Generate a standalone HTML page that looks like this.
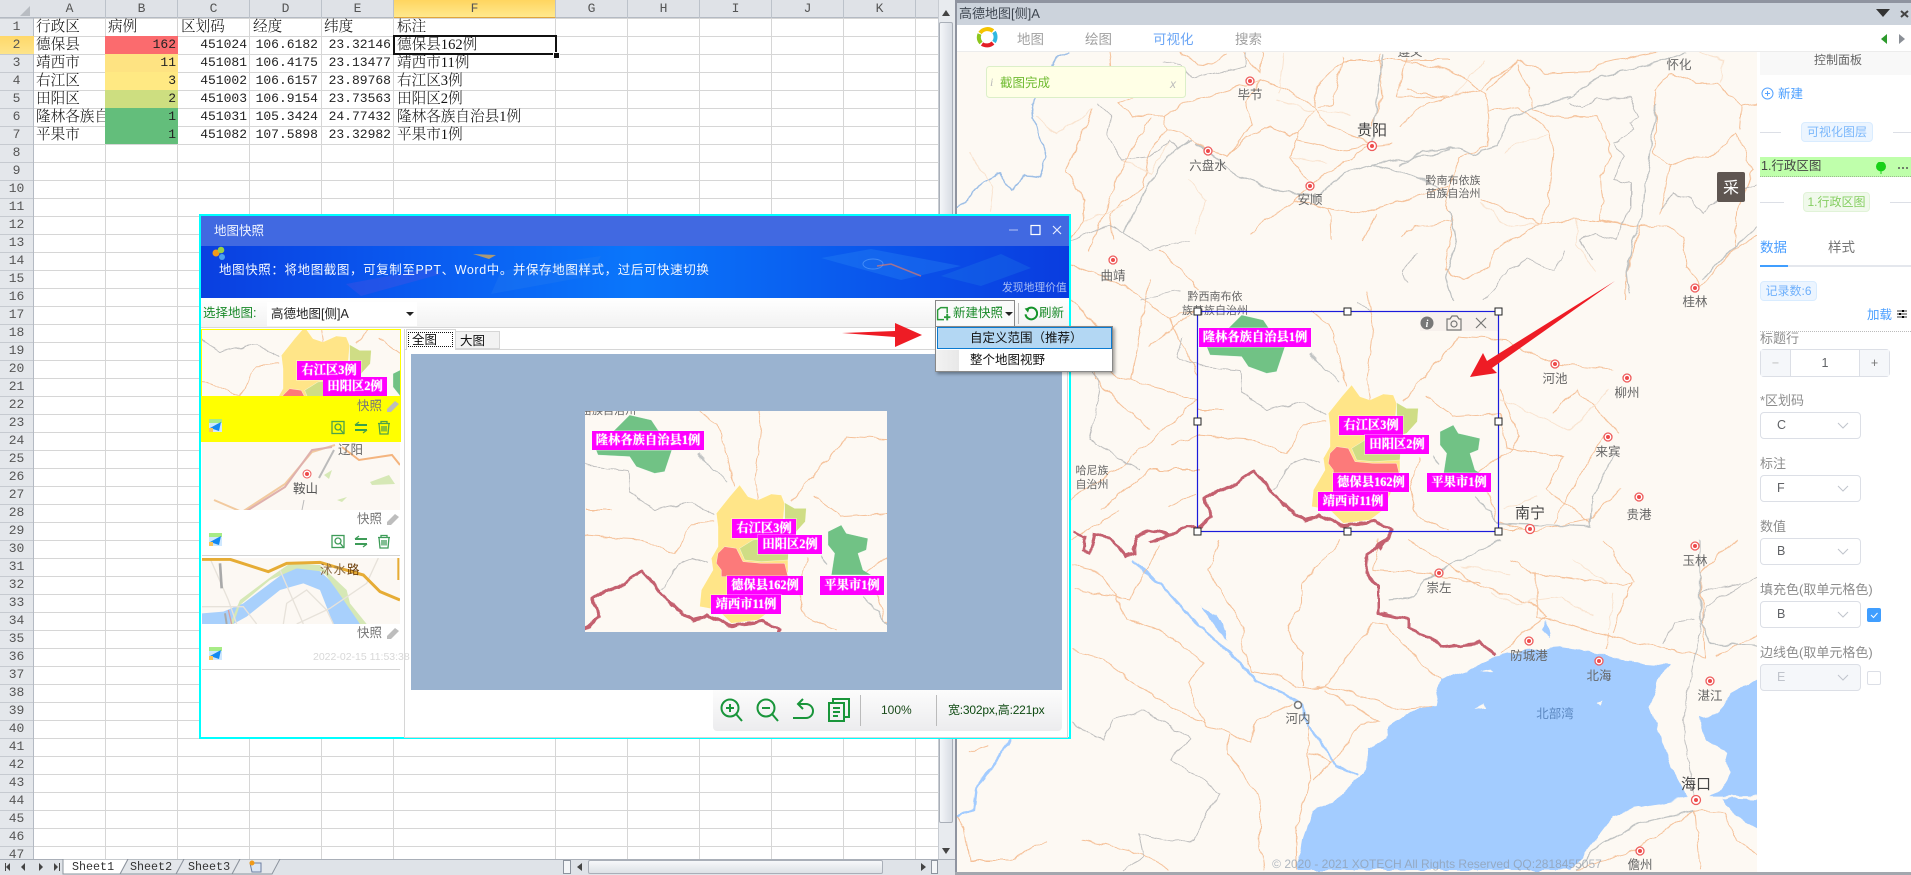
<!DOCTYPE html>
<html style="width:1911px;height:875px;overflow:hidden"><head><meta charset="utf-8"><title>地图快照</title>
<style>
html,body{margin:0;padding:0;background:#fff}
body{position:relative;width:1911px;height:875px;overflow:hidden;font-family:"Liberation Sans","Noto Sans CJK SC",sans-serif;color:#333}
#root{position:absolute;left:0;top:0;width:1911px;height:875px;overflow:hidden}
.a,.t,svg.a{position:absolute}
.t{white-space:nowrap}
.c{font-family:"Liberation Serif","Noto Serif CJK SC",serif;font-size:14.6px;line-height:18px;color:#111;font-weight:300}
.n{text-align:right;font-family:"Liberation Mono",monospace;font-size:13px;line-height:18px;color:#222}
.vl{position:absolute;top:18px;height:841px;width:1px;background:#d6d6d6}
.ch{position:absolute;top:0;height:18px;line-height:18px;text-align:center;font-family:"Liberation Mono",serif;font-size:13px;color:#555;border-right:1px solid #bcc2ca;box-sizing:border-box}
.lab{position:absolute;background:#f0f;color:#fff;font-family:"Liberation Serif","Noto Serif CJK SC",serif;font-weight:700;font-size:12.3px;height:19px;line-height:19px;text-align:center;white-space:nowrap;box-shadow:0 0 0 1px rgba(255,255,255,.3);text-shadow:0 0 1px #fff}
.pl{position:absolute;left:1760px;font-size:13px;color:#8d8d8d;white-space:nowrap;line-height:16px}
.sel{position:absolute;left:1760px;width:101px;height:27px;box-sizing:border-box;border:1px solid #dcdfe6;border-radius:4px;background:#fff;font-size:12.5px;line-height:25px;padding-left:16px;color:#606266}
.sel svg{position:absolute;right:11px;top:9px}
.road{fill:none;stroke:#f5c199;stroke-width:1;vector-effect:non-scaling-stroke}
.rdl{fill:none;stroke:#f9e3cf;stroke-width:1;vector-effect:non-scaling-stroke}
.gry{fill:none;stroke:#bdbdbd;stroke-width:.9;vector-effect:non-scaling-stroke}
.hwy{fill:none;stroke:#c0c3c3;stroke-width:1.3;vector-effect:non-scaling-stroke}
.city{font-size:12.5px;fill:#666;text-anchor:middle;font-family:"Liberation Sans","Noto Sans CJK SC",sans-serif}
.big{font-size:15px;fill:#444}
.sh{font-family:"Liberation Mono",monospace;font-size:11.7px;line-height:16px;color:#333}
</style></head><body><div id="root">

<!-- EXCEL -->
<div class="a" style="left:0;top:0;width:955px;height:875px;background:#fff"></div>
<div class="a" style="left:34px;top:18px;width:904px;height:841px;background:repeating-linear-gradient(180deg,#d6d6d6 0,#d6d6d6 1px,transparent 1px,transparent 18px)"></div>
<div class="vl" style="left:105px"></div><div class="vl" style="left:177px"></div><div class="vl" style="left:249px"></div><div class="vl" style="left:321px"></div><div class="vl" style="left:393px"></div><div class="vl" style="left:555px"></div><div class="vl" style="left:627px"></div><div class="vl" style="left:699px"></div><div class="vl" style="left:771px"></div><div class="vl" style="left:843px"></div><div class="vl" style="left:915px"></div>
<div class="a" style="left:0;top:0;width:938px;height:18px;background:#dfe2e7;border-bottom:1px solid #b4bac3;box-sizing:border-box"></div>
<div class="a" style="left:0;top:18px;width:34px;height:841px;background:repeating-linear-gradient(180deg,#c6cad0 0,#c6cad0 1px,#e4e7eb 1px,#e4e7eb 18px);border-right:1px solid #b4bac3;box-sizing:border-box"></div>
<div class="a" style="left:0;top:36px;width:34px;height:18px;background:linear-gradient(#ffd869,#fde48b)"></div>
<svg class="a" style="left:20px;top:6px" width="10" height="10"><path d="M10 0V10H0Z" fill="#b8bcc2"/></svg>
<div class="ch" style="left:34px;width:72px">A</div><div class="ch" style="left:106px;width:72px">B</div><div class="ch" style="left:178px;width:72px">C</div><div class="ch" style="left:250px;width:72px">D</div><div class="ch" style="left:322px;width:72px">E</div>
<div class="ch" style="left:394px;width:162px;background:linear-gradient(#ffd560,#ffe98e);border-bottom:1px solid #e0a53c">F</div>
<div class="ch" style="left:556px;width:72px">G</div><div class="ch" style="left:628px;width:72px">H</div><div class="ch" style="left:700px;width:72px">I</div><div class="ch" style="left:772px;width:72px">J</div><div class="ch" style="left:844px;width:72px">K</div><div class="ch" style="left:916px;width:22px;border-right:0"></div>
<div class="a" style="left:0;top:18px;width:33px;height:841px;overflow:hidden;text-align:center;font-family:'Liberation Mono',monospace;font-size:13px;line-height:18px;color:#555">1<br>2<br>3<br>4<br>5<br>6<br>7<br>8<br>9<br>10<br>11<br>12<br>13<br>14<br>15<br>16<br>17<br>18<br>19<br>20<br>21<br>22<br>23<br>24<br>25<br>26<br>27<br>28<br>29<br>30<br>31<br>32<br>33<br>34<br>35<br>36<br>37<br>38<br>39<br>40<br>41<br>42<br>43<br>44<br>45<br>46<br>47</div>

<div class="a" style="left:105px;top:36px;width:73px;height:18px;background:#fb6b6e"></div>
<div class="a" style="left:105px;top:54px;width:73px;height:18px;background:#fee382"></div>
<div class="a" style="left:105px;top:72px;width:73px;height:18px;background:#ffe983"></div>
<div class="a" style="left:105px;top:90px;width:73px;height:18px;background:#cdde80"></div>
<div class="a" style="left:105px;top:108px;width:73px;height:36px;background:#63be7b"></div>

<div class="t c" style="left:36px;top:18px">行政区</div><div class="t c" style="left:108px;top:18px">病例</div><div class="t c" style="left:181px;top:18px">区划码</div><div class="t c" style="left:253px;top:18px">经度</div><div class="t c" style="left:324px;top:18px">纬度</div><div class="t c" style="left:397px;top:18px">标注</div>
<div class="t c" style="left:36px;top:36px">德保县</div><div class="t c" style="left:36px;top:54px">靖西市</div><div class="t c" style="left:36px;top:72px">右江区</div><div class="t c" style="left:36px;top:90px">田阳区</div><div class="a c" style="left:36px;top:108px;width:69px;overflow:hidden;white-space:nowrap">隆林各族自治县</div><div class="t c" style="left:36px;top:126px">平果市</div>
<div class="t n" style="right:1735px;top:36px">162</div><div class="t n" style="right:1735px;top:54px">11</div><div class="t n" style="right:1735px;top:72px">3</div><div class="t n" style="right:1735px;top:90px">2</div><div class="t n" style="right:1735px;top:108px">1</div><div class="t n" style="right:1735px;top:126px">1</div>
<div class="t n" style="right:1664px;top:36px">451024</div><div class="t n" style="right:1664px;top:54px">451081</div><div class="t n" style="right:1664px;top:72px">451002</div><div class="t n" style="right:1664px;top:90px">451003</div><div class="t n" style="right:1664px;top:108px">451031</div><div class="t n" style="right:1664px;top:126px">451082</div>
<div class="t n" style="right:1593px;top:36px">106.6182</div><div class="t n" style="right:1593px;top:54px">106.4175</div><div class="t n" style="right:1593px;top:72px">106.6157</div><div class="t n" style="right:1593px;top:90px">106.9154</div><div class="t n" style="right:1593px;top:108px">105.3424</div><div class="t n" style="right:1593px;top:126px">107.5898</div>
<div class="t n" style="right:1520px;top:36px">23.32146</div><div class="t n" style="right:1520px;top:54px">23.13477</div><div class="t n" style="right:1520px;top:72px">23.89768</div><div class="t n" style="right:1520px;top:90px">23.73563</div><div class="t n" style="right:1520px;top:108px">24.77432</div><div class="t n" style="right:1520px;top:126px">23.32982</div>
<div class="t c" style="left:397px;top:36px">德保县162例</div><div class="t c" style="left:397px;top:54px">靖西市11例</div><div class="t c" style="left:397px;top:72px">右江区3例</div><div class="t c" style="left:397px;top:90px">田阳区2例</div><div class="t c" style="left:397px;top:108px">隆林各族自治县1例</div><div class="t c" style="left:397px;top:126px">平果市1例</div>
<div class="a" style="left:393px;top:35px;width:164px;height:20px;box-sizing:border-box;border:2px solid #111"></div>
<div class="a" style="left:553px;top:52px;width:5px;height:5px;background:#111;border:1px solid #fff"></div>

<!-- excel scrollbars + tabs -->
<div class="a" style="left:938px;top:0;width:17px;height:859px;background:#e8ebef;border-left:1px solid #c8ccd2;box-sizing:border-box"></div>
<div class="a" style="left:939px;top:22px;width:14px;height:801px;background:linear-gradient(90deg,#f4f6f9,#d8dde4);border:1px solid #a9afb8;box-sizing:border-box;border-radius:2px"></div>
<svg class="a" style="left:941px;top:847px" width="10" height="8"><path d="M1 1H9L5 7Z" fill="#444"/></svg>
<svg class="a" style="left:941px;top:9px" width="10" height="8"><path d="M1 7H9L5 1Z" fill="#444"/></svg>
<div class="a" style="left:0;top:859px;width:955px;height:16px;background:#dfe3e8;border-top:1px solid #a9afb8;box-sizing:border-box"></div>
<svg class="a" style="left:4px;top:860px" width="58" height="14" fill="#444"><path d="M6 3V11L2 7ZM1 3V11H2V3ZM21 3V11L17 7ZM35 3V11L39 7ZM50 3V11L54 7ZM55 3V11H56V3Z"/></svg>
<svg class="a" style="left:60px;top:859px" width="230" height="16">
<path d="M172 15H212L220 0H180Z" fill="#e4e7eb" stroke="#8d949e"/><path d="M116 15H172L180 0H124Z" fill="#e4e7eb" stroke="#8d949e"/><path d="M60 15H116L124 0H68Z" fill="#e4e7eb" stroke="#8d949e"/>
<path d="M3 0V15H60L68 0Z" fill="#fff" stroke="#8d949e"/>
<path d="M190 4H201V13H192Z" fill="#dbe6f5" stroke="#6c7ea0"/><circle cx="192" cy="4" r="2.500" fill="#f09a1a"/>
</svg>
<div class="t sh" style="left:72px;top:859px">Sheet1</div>
<div class="t sh" style="left:130px;top:859px">Sheet2</div>
<div class="t sh" style="left:188px;top:859px">Sheet3</div>
<div class="a" style="left:563px;top:860px;width:8px;height:14px;background:#f4f6f8;border:1px solid #8d949e;box-sizing:border-box"></div>
<div class="a" style="left:588px;top:860px;width:295px;height:14px;background:linear-gradient(#f6f8fa,#dde1e6);border:1px solid #a9afb8;box-sizing:border-box;border-radius:2px"></div>
<svg class="a" style="left:576px;top:862px" width="8" height="10"><path d="M6 1V9L1 5Z" fill="#444"/></svg>
<svg class="a" style="left:919px;top:862px" width="8" height="10"><path d="M2 1V9L7 5Z" fill="#444"/></svg>
<div class="a" style="left:931px;top:860px;width:7px;height:14px;background:#f4f6f8;border:1px solid #8d949e;box-sizing:border-box"></div>

<!-- RIGHT WINDOW -->
<div class="a" style="left:955px;top:0;width:956px;height:875px;background:#fff"></div>
<div class="a" style="left:955px;top:0;width:2px;height:875px;background:#8f94a0"></div>
<div class="a" style="left:955px;top:0;width:956px;height:3px;background:#8f94a0"></div>
<div class="a" style="left:957px;top:3px;width:954px;height:22px;background:#ccd3dc"></div>
<div class="t" style="left:959px;top:5px;font-size:13px;line-height:18px;color:#3e4650">高德地图[侧]A</div>
<svg class="a" style="left:1875px;top:8px" width="36" height="12"><path d="M1 1H15L8 9Z" fill="#333"/><path d="M26 3L33 9M33 3L26 9" stroke="#444" stroke-width="2"/></svg>
<div class="a" style="left:957px;top:25px;width:954px;height:27px;background:#fff;border-bottom:1px solid #ececec;box-sizing:border-box"></div>
<svg class="a" style="left:976px;top:26px" width="22" height="22" viewBox="0 0 22 22"><g fill="none" stroke-width="4"><path d="M4 7A9 9 0 0 1 17 5" stroke="#f5c400"/><path d="M18 6A9 9 0 0 1 18 16" stroke="#2fb8e0"/><path d="M17 17A9 9 0 0 1 6 18" stroke="#e31f26"/><path d="M5 17A9 9 0 0 1 3.500 8" stroke="#8cc61d"/></g></svg>
<div class="t" style="left:1017px;top:31px;font-size:13.5px;line-height:18px;color:#a0a0a0">地图</div>
<div class="t" style="left:1085px;top:31px;font-size:13.5px;line-height:18px;color:#a0a0a0">绘图</div>
<div class="t" style="left:1153px;top:31px;font-size:13.5px;line-height:18px;color:#6aa5f5">可视化</div>
<div class="t" style="left:1235px;top:31px;font-size:13.5px;line-height:18px;color:#a0a0a0">搜索</div>
<svg class="a" style="left:1880px;top:33px" width="28" height="12"><path d="M7 1V11L1 6Z" fill="#2c9a2c"/><path d="M19 1V11L25 6Z" fill="#8a8f96"/></svg>

<!-- MAP -->
<svg class="a" style="left:957px;top:52px" width="800" height="820" viewBox="957 52 800 820">
<defs>
<filter id="w" filterUnits="userSpaceOnUse" x="957" y="52" width="800" height="820" color-interpolation-filters="sRGB"><feTurbulence type="fractalNoise" baseFrequency=".07" numOctaves="2" seed="4" result="n"/><feDisplacementMap in="SourceGraphic" in2="n" scale="7" xChannelSelector="R" yChannelSelector="G"/></filter>
<g id="z9" transform="translate(1170,290) scale(.3333)">
<path class="road" d="M0 465L80 440L250 450L350 490L400 400L470 395M590 0L610 100L590 270L600 330M420 60L480 100L530 290M700 330L870 140L1000 150L1100 200L1155 220L1330 240M770 320L850 380L990 370L1010 470L1180 500L1130 600L1260 700M990 300L1050 440L1020 480L920 550M0 650L70 610M80 360L160 360M1000 720L1100 720L1260 690L1350 600M720 590L740 680L830 720M720 590L750 500M950 600L980 690L1060 720M1300 440L1220 570L1150 700M1350 430L1220 300L1150 370M0 90L30 70L110 60"/>
<path class="rdl" d="M990 330L1200 420L1320 300M530 530L620 560M1000 660L1100 620"/>
<path class="gry" d="M35 140L20 200L90 230L210 240L215 310L290 360L400 340L470 375M310 600L360 520L400 505L450 520M600 60L560 40"/>
<path class="hwy" d="M420 190L510 280M790 500L810 525M920 620L990 700L1260 710L1270 620L1340 480"/>
<path d="M-60 760L0 735L50 708L80 720L125 680L105 625L150 600L180 590L250 545L300 600L345 645L400 690L440 680L450 675L520 710L620 695L665 720L630 775" fill="none" stroke="#c4606f" stroke-width="3" vector-effect="non-scaling-stroke"/>
</g>
<g id="d" transform="translate(1170,290) scale(.3333)">
<path d="M545 285L570 320L600 330L640 312L670 315L680 340L675 400L690 440L690 545L640 660L600 690L520 700L480 660L425 650L430 600L465 540L460 505L480 470L480 410L475 370L515 320Z" fill="#ffe588" stroke="#fff"/>
<path d="M680 338L710 355L745 355L742 395L710 430L695 435L690 510L610 515L560 510L545 475L585 450L680 440Z" fill="#cfdd85" stroke="#fff"/>
<path d="M480 490L500 470L535 475L555 515L610 520L680 520L690 560L490 560L490 540L475 520Z" fill="#fc7a7a" stroke="#fff"/>
<path d="M850 405L865 430L930 445L925 480L900 490L915 540L940 555L820 555L830 490L810 465L810 425Z" fill="#71c285" stroke="#fff"/>
<path d="M215 75L280 90L300 120L345 170L320 245L290 250L235 230L215 200L120 195L110 170L170 120Z" fill="#71c285" stroke="#fff"/>
</g>
</defs>
<rect x="957" y="52" width="800" height="820" fill="#fdf9f3"/>
<g filter="url(#w)">
<g transform="translate(950,540) scale(.5102,.3333)">
<path d="M680 990L690 900L710 810L750 790L790 730L815 700L820 630L855 590L860 560L895 520L950 495L960 420L1020 390L1070 350L1130 330L1200 320L1270 340L1330 365L1410 372L1385 430L1370 500L1400 620L1420 700L1445 770L1400 790L1340 805L1300 830L1280 870L1240 950L1215 990Z" fill="#a3ccff"/>
<path d="M1600 400L1530 460L1510 520L1470 530L1480 600L1520 640L1530 700L1510 750L1490 770L1600 770Z" fill="#a3ccff"/>
<path d="M1600 780L1510 775L1540 830L1600 880Z" fill="#a3ccff"/>
<path d="M1170 240L1160 270L1175 290ZM490 190L530 240L545 300L520 260Z" fill="#a3ccff"/>
<path d="M1030 510L1045 490L1050 505ZM1265 490L1280 485L1275 500ZM1040 395L1060 385L1065 395Z" fill="#fdf9f3"/>
<path d="M355 60L410 130L470 230L520 300L580 390L600 420L650 460L690 490L700 560L740 630L760 680L800 710" fill="none" stroke="#a3ccff" stroke-width="2.500" vector-effect="non-scaling-stroke"/>
<path d="M120 600L80 680L50 750L45 810L15 830" fill="none" stroke="#a3ccff" stroke-width="2.500" vector-effect="non-scaling-stroke"/>
<path class="road" d="M240 70L300 105L345 235L410 270L495 365L465 430L500 560L545 575L590 610L600 545L670 490M505 90L540 180L575 260L570 310L590 395L650 410L680 445L735 440L815 470L880 510L945 500M530 0L505 90M240 330L300 360L400 470L500 555M765 0L690 130L690 190L660 270L690 340L690 440M735 440L760 390L780 345L830 250L855 255L930 380L960 420M545 580L545 640L610 780L605 900L615 990M700 560L705 720L680 860L680 990M705 640L750 670L710 720M750 670L805 550L840 545L735 450M900 0L1040 140L1140 190L1170 230L1140 260L1080 340M1100 60L1140 100L1290 130L1335 130L1300 280M1150 100L1150 230L1180 240L1320 300L1480 350M1280 0L1340 130M1290 280L1290 330M1500 350L1590 280M1540 0L1470 100L1480 350M840 0L830 90L940 100L1040 130M190 905L120 960L40 960L30 860L15 830M35 640L75 620M260 900L375 940L430 990M1460 810L1520 820L1540 900L1590 950M1460 810L1470 990M1460 810L1340 930L1230 990"/>
<path class="rdl" d="M1060 160L1100 190L1200 170L1260 230M1220 60L1290 130M1300 160L1290 270M1000 80L1100 100"/>
<path class="gry" d="M240 550L300 600L320 540L380 510L430 560L470 600L430 660L480 700L530 760L500 830L480 900L440 905L370 880L380 950L340 990M1470 160L1490 150L1550 130M1460 240L1420 250L1400 310M1590 100L1480 200L1440 500L1440 600L1460 770"/>
<path class="hwy" d="M1080 0L1000 60L930 120L910 170L860 180M1470 0L1470 230L1490 310L1590 320M1460 810L1350 850L1270 920L1230 990"/>
</g>
<g transform="translate(950,0) scale(.3333)">
<path d="M355 155L320 170L300 210L245 310L250 360L290 470L270 530L230 525L185 570L150 520L100 545L50 600L25 620" fill="none" stroke="#9ebfe6" stroke-width="1.500" vector-effect="non-scaling-stroke"/>
<path class="road" d="M480 155L485 195L540 240L555 290L510 310L550 345L640 350L700 310L780 285L880 255L930 240L1010 270L1090 320L1130 375L1265 435M640 350L650 390L720 410L770 450L830 470L880 420L960 380L1020 405L1045 400L1090 330M430 330L345 515L405 600L400 660L360 720M650 390L600 450L580 560L480 640L490 720M1265 435L1100 540L1030 600L1140 625L1240 640L1290 620L1500 560M1045 400L1020 470L1070 540M1040 420L1180 450L1265 435L1330 430M1180 170L1150 310L1100 320M1290 160L1300 290L1265 380M1370 170L1340 290L1500 290M930 240L890 310L910 370L830 470M690 155L740 190L790 195L830 160M880 155L930 220L935 155M1280 640L1240 720M1140 625L1145 720M1030 600L900 700M1500 180L1370 180L1180 180L1100 260L1090 320"/>
<path class="rdl" d="M260 350L320 400L430 330M510 480L600 520L660 420M980 300L1080 330L1200 340M1020 470L1130 490M1000 160L985 280M60 460L130 560L120 640M400 660L520 620M720 540L770 600L730 700"/>
<path class="gry" d="M640 185L690 195L730 235L890 200L890 160M445 310L485 345L470 400L510 480L600 470L660 420L680 450L720 420"/>
<path class="hwy" d="M730 420L670 450L600 545L520 700M740 430L870 530L970 570L1100 590L1180 520L1275 490L1420 470L1500 450M1265 490L1420 540L1500 590M1300 160L1285 300L1265 430"/>
</g>
<g transform="translate(1400,40) scale(.3333)">
<path class="road" d="M0 60L150 90L260 160L265 240L260 320L175 355L140 490L160 540L135 690L190 720L270 680L280 630L420 550L440 500L460 340L445 270L355 200L265 215M140 175L20 145M140 175L245 145L350 60L440 100L570 95L600 70L800 30M265 150L350 60M350 70L390 150L400 210L465 230L590 230L610 260L635 350L600 410L610 490L595 540L720 560L800 555L850 590L860 680L900 740L1000 630L1070 590M420 550L530 535L720 560L680 700L675 780M810 100L765 150L770 280L760 340L810 375L880 350L930 355L1010 280L1060 390L1010 520L1000 630M810 375L780 520M810 100L890 130L950 130L1025 200L1020 270M1025 200L1080 190M0 260L60 200L140 175M0 590L45 560L160 545M245 480L420 550"/>
<path class="rdl" d="M245 490L320 560L420 550M530 535L530 610L590 700M800 0L970 60L960 130M250 60L160 170M320 340L350 310L450 280"/>
<path class="gry" d="M510 190L540 205L590 175L690 175L715 230L690 250L700 270L640 310L670 350L640 420L690 430L690 500L650 600L590 580L540 600L580 660M500 630L460 690L380 655L330 690L250 780M50 640L10 690L20 730M780 510L820 460L860 470L910 520L960 470L1070 435"/>
<path class="hwy" d="M510 170L400 205L330 230L290 320L220 345L170 325L70 335L0 375M860 40L740 75L600 110L500 180M770 190L740 420L730 510L700 600L680 700L690 760M150 510L170 600L140 710L160 780M1070 560L900 720"/>
</g>
<path class="road" d="M1071 265L1125 285L1170 320L1197 375M1071 360L1130 380L1197 400L1130 460L1071 500M1075 590L1130 600L1160 545M1090 250L1120 170L1150 120M957 230L1020 250L1071 270M1130 380L1150 280M1100 510L1150 470L1200 470M1071 300L1100 330L1095 380L1150 430M1160 250L1200 290M1071 540L1120 510M1150 345L1197 310"/>
<path class="gry" d="M1080 330L1100 390L1090 440L1140 470M1140 300L1180 290M1071 240L1110 225L1150 250L1190 240"/>
<use href="#z9"/>
<path d="M1073 532L1085 537L1083 550L1090 552L1095 535L1110 538L1125 556L1136 553L1135 535L1150 530L1170 535M1386 540L1368 553L1366 573L1378 587L1378 613L1409 620L1409 628L1430 638L1442 648L1480 643L1496 655" fill="none" stroke="#c4606f" stroke-width="3"/>
</g>
<use href="#d"/>
<g fill="#fff" stroke="#ee5c5c" stroke-width="1.300">
<circle cx="1250" cy="81" r="4"/><circle cx="1372" cy="146" r="4.500"/><circle cx="1208" cy="151" r="4"/><circle cx="1310" cy="186" r="4"/><circle cx="1695" cy="288" r="4"/><circle cx="1113" cy="260" r="4"/><circle cx="1555" cy="364" r="4"/><circle cx="1627" cy="378" r="4"/><circle cx="1608" cy="437" r="4"/><circle cx="1639" cy="497" r="4"/><circle cx="1695" cy="546" r="4"/><circle cx="1530" cy="529" r="4.500"/><circle cx="1439" cy="573" r="4"/><circle cx="1529" cy="641" r="4"/><circle cx="1599" cy="661" r="4"/><circle cx="1710" cy="681" r="4"/><circle cx="1696" cy="800" r="4.500"/><circle cx="1640" cy="851" r="4"/></g>
<g fill="#ee4a4a"><circle cx="1250" cy="81" r="2"/><circle cx="1372" cy="146" r="2"/><circle cx="1208" cy="151" r="2"/><circle cx="1310" cy="186" r="2"/><circle cx="1695" cy="288" r="2"/><circle cx="1113" cy="260" r="2"/><circle cx="1555" cy="364" r="2"/><circle cx="1627" cy="378" r="2"/><circle cx="1608" cy="437" r="2"/><circle cx="1639" cy="497" r="2"/><circle cx="1695" cy="546" r="2"/><circle cx="1530" cy="529" r="2"/><circle cx="1439" cy="573" r="2"/><circle cx="1529" cy="641" r="2"/><circle cx="1599" cy="661" r="2"/><circle cx="1710" cy="681" r="2"/><circle cx="1696" cy="800" r="2"/><circle cx="1640" cy="851" r="2"/></g>
<circle cx="1298" cy="705" r="3.500" fill="#fff" stroke="#777" stroke-width="1.500"/>
<g class="city">
<text x="1250" y="99">毕节</text><text x="1208" y="170">六盘水</text><text x="1310" y="204">安顺</text>
<text x="1372" y="135" class="big">贵阳</text>
<text x="1453" y="184" font-size="11">黔南布依族</text><text x="1453" y="197" font-size="11">苗族自治州</text>
<text x="1679" y="69">怀化</text><text x="1113" y="280">曲靖</text><text x="1695" y="306">桂林</text>
<text x="1215" y="300" font-size="11">黔西南布依</text><text x="1215" y="314" font-size="11">族苗族自治州</text>
<text x="1555" y="383">河池</text><text x="1627" y="397">柳州</text><text x="1608" y="456">来宾</text><text x="1639" y="519">贵港</text><text x="1695" y="565">玉林</text>
<text x="1530" y="518" class="big">南宁</text><text x="1439" y="592">崇左</text><text x="1529" y="660">防城港</text><text x="1599" y="680">北海</text><text x="1710" y="700">湛江</text>
<text x="1555" y="718" style="fill:#5b87c0">北部湾</text><text x="1696" y="789" class="big">海口</text><text x="1640" y="869">儋州</text><text x="1298" y="723">河内</text>
<text x="1092" y="474" font-size="11">哈尼族</text><text x="1092" y="488" font-size="11">自治州</text>
<text x="1410" y="56">遵义</text>
</g>
<rect x="986.500" y="66.500" width="199" height="31" rx="3" fill="#ffffe6" stroke="#dcefc8"/>
<text x="990" y="86" font-size="12" font-style="italic" fill="#bbb" font-family="Liberation Serif">i</text>
<text x="1000" y="87" font-size="12.500" fill="#6fbb30">截图完成</text>
<text x="1170" y="88" font-size="12" font-style="italic" fill="#bbb">x</text>
<text x="1437" y="868" font-size="12" text-anchor="middle" fill="#8e9aa8" opacity=".7">© 2020 - 2021 XOTECH All Rights Reserved QQ:2818455057</text>
<rect x="1717" y="172" width="28" height="30" rx="2" fill="#5f5651"/>
<text x="1731" y="193" font-size="16" fill="#fff" text-anchor="middle">采</text>
<!-- selection -->
<rect x="1420" y="313" width="78" height="18" fill="#f6efec" opacity=".9"/>
<circle cx="1427" cy="323" r="6.500" fill="#777"/><text x="1427" y="327" font-size="10" font-weight="700" font-style="italic" fill="#fff" text-anchor="middle" font-family="Liberation Serif">i</text>
<g fill="none" stroke="#777" stroke-width="1.200"><path d="M1447 319H1450L1452 316H1457L1459 319H1461V330H1447Z"/><circle cx="1454" cy="324" r="3"/><path d="M1476 318L1486 328M1486 318L1476 328"/></g>
<rect x="1197.500" y="311.500" width="301" height="220" fill="none" stroke="#1b1bdc" stroke-width="1.200"/>
<g fill="#fff" stroke="#222"><rect x="1194" y="308" width="7" height="7"/><rect x="1344" y="308" width="7" height="7"/><rect x="1495" y="308" width="7" height="7"/><rect x="1194" y="418" width="7" height="7"/><rect x="1495" y="418" width="7" height="7"/><rect x="1194" y="528" width="7" height="7"/><rect x="1344" y="528" width="7" height="7"/><rect x="1495" y="528" width="7" height="7"/></g>
<path d="M1615 281L1492 368L1497 373L1470 377L1483 353L1487 361Z" fill="#ee1c25"/>
</svg>
<div class="lab" style="left:1199px;top:328px;width:112px">隆林各族自治县1例</div>
<div class="lab" style="left:1339px;top:416px;width:64px">右江区3例</div>
<div class="lab" style="left:1365px;top:435px;width:64px">田阳区2例</div>
<div class="lab" style="left:1333px;top:473px;width:76px">德保县162例</div>
<div class="lab" style="left:1318px;top:492px;width:70px">靖西市11例</div>
<div class="lab" style="left:1427px;top:473px;width:64px">平果市1例</div>

<!-- RIGHT PANEL -->
<div class="a" style="left:1757px;top:52px;width:154px;height:820px;background:#fff"></div>
<div class="a" style="left:1760px;top:52px;width:151px;height:23px;background:#f8f8f8"></div>
<div class="t" style="left:1814px;top:52px;font-size:12px;line-height:17px;color:#666">控制面板</div>
<svg class="a" style="left:1761px;top:87px" width="13" height="13" viewBox="0 0 13 13"><circle cx="6.500" cy="6.500" r="5.500" fill="none" stroke="#56a3ff"/><path d="M4 6.500H9M6.500 4V9" stroke="#56a3ff"/></svg>
<div class="t" style="left:1778px;top:85px;font-size:12.5px;line-height:18px;color:#4a9eff">新建</div>
<div class="a" style="left:1760px;top:132px;width:21px;height:1px;background:#dcdfe6"></div><div class="a" style="left:1893px;top:132px;width:18px;height:1px;background:#dcdfe6"></div>
<div class="a" style="left:1801px;top:122px;width:72px;height:20px;box-sizing:border-box;border:1px solid #d9ecff;border-radius:4px;background:#ecf5ff;color:#7cb8fb;font-size:12px;line-height:18px;text-align:center">可视化图层</div>
<div class="a" style="left:1760px;top:157px;width:151px;height:20px;background:#bfffab;border-bottom:1px dotted #9bbb90;box-sizing:border-box"></div>
<div class="t" style="left:1761px;top:157px;font-size:12.5px;line-height:19px;color:#444">1.行政区图</div>
<svg class="a" style="left:1876px;top:162px" width="34" height="13"><path d="M5 0A4.500 4.500 0 0 1 5 9Q5 12 5 12Q5 12 5 9A4.500 4.500 0 0 1 5 0Z" fill="#17d117" stroke="#17d117"/><circle cx="23" cy="6" r="1" fill="#555"/><circle cx="27" cy="6" r="1" fill="#555"/><circle cx="31" cy="6" r="1" fill="#555"/></svg>
<div class="a" style="left:1760px;top:202px;width:24px;height:1px;background:#dcdfe6"></div><div class="a" style="left:1890px;top:202px;width:21px;height:1px;background:#dcdfe6"></div>
<div class="a" style="left:1803px;top:192px;width:67px;height:20px;box-sizing:border-box;border:1px solid #e1f3d8;border-radius:4px;background:#f0f9eb;color:#85ce61;font-size:12px;line-height:18px;text-align:center">1.行政区图</div>
<div class="t" style="left:1760px;top:238px;font-size:13.5px;line-height:19px;color:#4a9eff">数据</div>
<div class="t" style="left:1828px;top:238px;font-size:13.5px;line-height:19px;color:#777">样式</div>
<div class="a" style="left:1760px;top:265px;width:151px;height:2px;background:#e4e7ed"></div><div class="a" style="left:1760px;top:265px;width:28px;height:2px;background:#409eff"></div>
<div class="a" style="left:1760px;top:281px;width:57px;height:20px;box-sizing:border-box;border:1px solid #d9ecff;border-radius:4px;background:#ecf5ff;color:#6fb0fb;font-size:12px;line-height:18px;text-align:center">记录数:6</div>
<div class="t" style="left:1867px;top:306px;font-size:12.5px;line-height:18px;color:#4a9eff">加载</div>
<svg class="a" style="left:1896px;top:308px" width="12" height="12"><path d="M1 3H11M1 6H11M1 9H11" stroke="#333"/><path d="M7 2V4M4 5V7M7 8V10" stroke="#000" stroke-width="2"/></svg>
<div class="a" style="left:1760px;top:331px;width:151px;border-top:1px dotted #bbb"></div>
<div class="pl" style="top:331px">标题行</div>
<div class="a" style="left:1760px;top:349px;width:130px;height:28px;box-sizing:border-box;border:1px solid #dcdfe6;border-radius:4px;background:#fff;text-align:center;font-size:12.5px;line-height:26px;color:#606266">1<div class="a" style="left:0;top:0;width:29px;height:26px;background:#f5f7fa;border-right:1px solid #dcdfe6;color:#bbb">−</div><div class="a" style="right:0;top:0;width:29px;height:26px;background:#f5f7fa;border-left:1px solid #dcdfe6;color:#777">+</div></div>
<div class="pl" style="top:393px">*区划码</div>
<div class="sel" style="top:412px">C<svg width="12" height="7"><path d="M1 1L6 6L11 1" fill="none" stroke="#c0c4cc"/></svg></div>
<div class="pl" style="top:456px">标注</div>
<div class="sel" style="top:475px">F<svg width="12" height="7"><path d="M1 1L6 6L11 1" fill="none" stroke="#c0c4cc"/></svg></div>
<div class="pl" style="top:519px">数值</div>
<div class="sel" style="top:538px">B<svg width="12" height="7"><path d="M1 1L6 6L11 1" fill="none" stroke="#c0c4cc"/></svg></div>
<div class="pl" style="top:582px">填充色(取单元格色)</div>
<div class="sel" style="top:601px">B<svg width="12" height="7"><path d="M1 1L6 6L11 1" fill="none" stroke="#c0c4cc"/></svg></div>
<div class="a" style="left:1867px;top:608px;width:14px;height:14px;background:#409eff;border-radius:2px"></div>
<svg class="a" style="left:1867px;top:608px" width="14" height="14"><path d="M4 7L6.500 9.500L10.500 5" fill="none" stroke="#fff"/></svg>
<div class="pl" style="top:645px">边线色(取单元格色)</div>
<div class="sel" style="top:664px;background:#f5f7fa;color:#c0c4cc">E<svg width="12" height="7"><path d="M1 1L6 6L11 1" fill="none" stroke="#c0c4cc"/></svg></div>
<div class="a" style="left:1867px;top:671px;width:14px;height:14px;background:#fff;border:1px solid #dcdfe6;border-radius:2px;box-sizing:border-box"></div>
<div class="a" style="left:955px;top:872px;width:956px;height:3px;background:#a3a7ae"></div>

<!-- DIALOG -->
<div class="a" style="left:199px;top:214px;width:872px;height:525px;box-sizing:border-box;border:2px solid #0ff;background:#fff"></div>
<div class="a" style="left:201px;top:216px;width:868px;height:30px;background:#4169e1"></div>
<div class="t" style="left:214px;top:221px;font-size:12.5px;line-height:20px;color:#f0f4ff">地图快照</div>
<svg class="a" style="left:1005px;top:222px" width="62" height="16"><path d="M4 8H13" stroke="#8fa6ee" stroke-width="1.500"/><rect x="26" y="3.500" width="9" height="9" fill="none" stroke="#fff" stroke-width="1.200"/><path d="M48 4L56 12M56 4L48 12" stroke="#e6ecff" stroke-width="1.200"/></svg>
<div class="a" style="left:201px;top:246px;width:868px;height:52px;background:linear-gradient(90deg,#0a3fe0 0%,#0a57ee 22%,#0a76fb 50%,#0a5ff0 70%,#0a3cdf 100%)"></div>
<svg class="a" style="left:201px;top:246px" width="868" height="52">
<g fill="#2b8cf5" opacity=".3"><path d="M620 12L670 3L760 20L700 34Z"/><path d="M800 8L830 22L780 40L740 30Z" fill="#1f7de8"/><path d="M300 25L400 10L390 30L290 48Z" fill="#2b7ff0"/></g>
<path d="M145 38L230 22L240 28L160 50Z" fill="#6a4fdc" opacity=".25"/><path d="M272 8L295 9L288 13Z" fill="#f0b040" opacity=".7"/>
<ellipse cx="672" cy="18" rx="10" ry="5" fill="none" stroke="#6fb0ff" opacity=".5"/><path d="M676 20L690 18L720 30" stroke="#ff7b55" stroke-width="1.500" fill="none" opacity=".6"/>
<circle cx="15" cy="7" r="3.500" fill="#f09a1a"/><circle cx="20" cy="4" r="3.300" fill="#9ad044"/><circle cx="21" cy="11" r="3" fill="#4aa0f0"/></svg>
<div class="t" style="left:219px;top:261px;font-size:12.500px;line-height:18px;color:#f4f8ff;letter-spacing:.6px">地图快照：将地图截图，可复制至PPT、Word中。并保存地图样式，过后可快速切换</div>
<div class="t" style="left:1002px;top:281px;font-size:10.800px;line-height:14px;color:#a8bcf4">发现地理价值</div>
<div class="a" style="left:201px;top:298px;width:868px;height:30px;background:linear-gradient(#fff,#f2f2f2);border-bottom:1px solid #d8d8d8;box-sizing:border-box"></div>
<div class="t" style="left:203px;top:304px;font-size:12.500px;line-height:18px;color:#1a8a2a">选择地图:</div>
<div class="a" style="left:267px;top:302px;width:150px;height:24px;background:#fff"></div>
<div class="t" style="left:271px;top:305px;font-size:12.500px;line-height:18px;color:#222">高德地图[侧]A</div>
<svg class="a" style="left:405px;top:311px" width="10" height="6"><path d="M1 1H9L5 5Z" fill="#222"/></svg>

<!-- toolbar buttons -->
<div class="a" style="left:935px;top:300px;width:80px;height:27px;border:1px solid #888;border-bottom:0;box-sizing:border-box;background:#fafafa"></div>
<svg class="a" style="left:936px;top:306px" width="16" height="16" viewBox="0 0 20 20"><path d="M10 17H2V5L6 2H14V9" fill="none" stroke="#2a9a3a" stroke-width="1.800"/><path d="M14 10V18M10 14H18" stroke="#2a9a3a" stroke-width="2.400"/></svg>
<div class="t" style="left:953px;top:304px;font-size:12.500px;line-height:18px;color:#1a8a2a">新建快照</div>
<svg class="a" style="left:1004px;top:311px" width="10" height="6"><path d="M1 1H9L5 5Z" fill="#222"/></svg>
<div class="a" style="left:1018px;top:303px;width:1px;height:21px;background:#bbb"></div>
<svg class="a" style="left:1023px;top:306px" width="15" height="15" viewBox="0 0 18 18"><path d="M5 4A7 7 0 1 1 3 10" fill="none" stroke="#14932a" stroke-width="2.400"/><path d="M2 3L8 2L6 8Z" fill="#14932a"/></svg>
<div class="t" style="left:1039px;top:304px;font-size:12.500px;line-height:18px;color:#1a8a2a">刷新</div>

<!-- left list -->
<div class="a" style="left:404px;top:329px;width:1px;height:408px;background:#d6d6d6"></div>
<div class="a" style="left:404px;top:737px;width:663px;height:1px;background:#d6d6d6"></div>
<div class="a" style="left:1067px;top:328px;width:1px;height:410px;background:#d6d6d6"></div>
<svg class="a" style="left:202px;top:329px" width="198" height="67" viewBox="1249 387 198 67"><rect x="1249" y="387" width="198" height="67" fill="#fdf9f3"/><g filter="url(#w)"><use href="#z9"/></g><use href="#d"/></svg>
<div class="lab" style="left:297px;top:361px;width:64px">右江区3例</div>
<div class="a" style="left:323px;top:377px;width:64px;height:19px;overflow:hidden"><div class="lab" style="left:0;top:0;width:64px">田阳区2例</div></div>
<div class="a" style="left:201px;top:329px;width:200px;height:113px;box-sizing:border-box;border:1px solid #ff0"></div>
<div class="a" style="left:201px;top:396px;width:200px;height:46px;background:#ff0"></div>
<div class="t" style="left:357px;top:397px;font-size:12.500px;line-height:18px;color:#777">快照</div>
<div class="t" style="left:357px;top:510px;font-size:12.500px;line-height:18px;color:#777">快照</div>
<div class="t" style="left:357px;top:624px;font-size:12.500px;line-height:18px;color:#777">快照</div>
<svg class="a" style="left:385px;top:398px" width="16" height="16"><path d="M2 11L10 3L14 6L6 14L2 14Z" fill="#bdbdbd"/></svg>
<svg class="a" style="left:385px;top:511px" width="16" height="16"><path d="M2 11L10 3L14 6L6 14L2 14Z" fill="#bdbdbd"/></svg>
<svg class="a" style="left:385px;top:625px" width="16" height="16"><path d="M2 11L10 3L14 6L6 14L2 14Z" fill="#bdbdbd"/></svg>
<svg class="a" style="left:209px;top:419px" width="13" height="13"><rect width="13" height="13" fill="#cfe8ff"/><rect width="13" height="4" fill="#a7ec86"/><path d="M1 9L12 3L10 12Z" fill="#1489f0"/><rect y="9" width="4" height="4" fill="#f9c55a"/></svg>
<svg class="a" style="left:209px;top:533px" width="13" height="13"><rect width="13" height="13" fill="#cfe8ff"/><rect width="13" height="4" fill="#a7ec86"/><path d="M1 9L12 3L10 12Z" fill="#1489f0"/><rect y="9" width="4" height="4" fill="#f9c55a"/></svg>
<svg class="a" style="left:209px;top:647px" width="13" height="13"><rect width="13" height="13" fill="#cfe8ff"/><rect width="13" height="4" fill="#a7ec86"/><path d="M1 9L12 3L10 12Z" fill="#1489f0"/><rect y="9" width="4" height="4" fill="#f9c55a"/></svg>
<svg class="a" style="left:331px;top:420px" width="62" height="16" fill="none" stroke="#4da24a" stroke-width="1.300"><rect x="1" y="1.500" width="12" height="12"/><circle cx="7" cy="7" r="3"/><path d="M9 9L13 14"/><path d="M24 5H36M36 10H24" stroke-width="2" stroke="#3aa14a"/><path d="M24 5L28 2M36 10L32 13"/><path d="M47 3.500H59M50 3.500V1.500H56V3.500M48 3.500L49 14H57L58 3.500M51 6V11.500M53 6V11.500M55 6V11.500"/></svg>
<svg class="a" style="left:331px;top:534px" width="62" height="16" fill="none" stroke="#3e9c58" stroke-width="1.300"><rect x="1" y="1.500" width="12" height="12"/><circle cx="7" cy="7" r="3"/><path d="M9 9L13 14"/><path d="M24 5H36M36 10H24" stroke-width="2"/><path d="M24 5L28 2M36 10L32 13"/><path d="M47 3.500H59M50 3.500V1.500H56V3.500M48 3.500L49 14H57L58 3.500M51 6V11.500M53 6V11.500M55 6V11.500"/></svg>
<!-- thumb 2 -->
<svg class="a" style="left:202px;top:442px" width="198" height="68" viewBox="190 210 198 68" preserveAspectRatio="none"><rect x="190" y="210" width="198" height="68" fill="#fcf8f3"/>
<path d="M202 268L230 280L273 252L300 220L323 213" fill="none" stroke="#f2ca9f" stroke-width="2"/><path d="M233 280L273 255L300 218L320 215" fill="none" stroke="#dfb0ad" stroke-width="2"/><path d="M307 246L322 218" stroke="#bbb" stroke-width="2" fill="none"/><path d="M330 215L347 228L380 223L388 233" fill="none" stroke="#f4b47e" stroke-width="2"/><path d="M358 250L377 243L383 252L360 253ZM325 268L335 265L330 270ZM312 243L320 238L317 247Z" fill="#d6e8b6"/><path d="M290 278L292 268" stroke="#bbb" fill="none"/>
</svg>
<div class="t" style="left:338px;top:442px;font-size:12.500px;line-height:16px;color:#666">辽阳</div>
<div class="t" style="left:293px;top:480px;font-size:12.500px;line-height:18px;color:#555">鞍山</div>
<svg class="a" style="left:300px;top:467px" width="14" height="14"><circle cx="7" cy="7" r="4" fill="#fff" stroke="#ee5c5c"/><circle cx="7" cy="7" r="2" fill="#ee4a4a"/></svg>
<div class="a" style="left:202px;top:555px;width:198px;height:1px;background:#d4d4d4"></div>
<!-- thumb 3 -->
<svg class="a" style="left:202px;top:558px" width="198" height="66" viewBox="36 174 594 198" preserveAspectRatio="none">
<rect x="36" y="174" width="594" height="198" fill="#fcf8f3"/>
<path d="M36 372V340L100 335L160 310L240 250L300 205L380 205L430 250L470 300L510 372H430L390 270L340 250L270 270L170 350L130 372Z" fill="#a8d0fc"/>
<path d="M300 190L390 195L470 270L480 310L530 372H510L440 270L400 215L320 205L240 240L150 315L130 372H120L150 300L250 225Z" fill="#d6e8b6"/>
<g fill="none" stroke="#e7e2da" stroke-width="4"><path d="M36 320H160L200 372M270 210L340 372M60 175L115 300L140 372M320 372L420 325L530 250L565 174M280 372L290 310L350 270L410 330L430 372"/></g>
<path d="M36 178L120 178L235 215L290 190L390 187L450 205L520 225L570 275L630 300" fill="none" stroke="#e6ac35" stroke-width="9"/>
<path d="M90 190L95 265" fill="none" stroke="#a9a9a9" stroke-width="8"/><path d="M105 340L110 372" stroke="#aaa" stroke-width="6"/><path d="M115 330L125 372" stroke="#d9a0a0" stroke-width="4"/>
<path d="M625 174V240" stroke="#e6ac35" stroke-width="6"/>
</svg>
<div class="t" style="left:320px;top:561px;font-size:12.500px;line-height:18px;color:#8a6a42;letter-spacing:1px">沭水<span style="color:#6b3d07">路</span></div>
<div class="t" style="left:313px;top:650px;font-size:10.500px;line-height:14px;color:#d8d8d8">2022-02-15 11:53:38</div>
<div class="a" style="left:202px;top:669px;width:198px;height:1px;background:#d4d4d4"></div>

<!-- tabs and canvas -->
<div class="a" style="left:405px;top:349px;width:662px;height:1px;background:#d6d6d6"></div>
<div class="a" style="left:455px;top:331px;width:45px;height:18px;background:#f2f2f2;border:1px solid #d6d6d6;box-sizing:border-box"></div>
<div class="a" style="left:406px;top:329px;width:50px;height:21px;background:#fff;border:1px solid #d6d6d6;border-bottom:0;box-sizing:border-box"></div>
<div class="a" style="left:408px;top:332px;width:45px;height:15px;border:1px dotted #111;box-sizing:border-box"></div>
<div class="t" style="left:412px;top:331px;font-size:12.500px;line-height:18px;color:#111">全图</div>
<div class="t" style="left:460px;top:332px;font-size:12.500px;line-height:18px;color:#111">大图</div>
<div class="a" style="left:411px;top:354px;width:651px;height:336px;background:#9ab3d0"></div>
<svg class="a" style="left:585px;top:411px" width="302" height="221" viewBox="1197 311 302 221"><rect x="1197" y="311" width="302" height="221" fill="#fdf9f3"/><g filter="url(#w)"><use href="#z9"/></g><use href="#d"/><text x="1215" y="314" font-size="11" fill="#666" text-anchor="middle">族苗族自治州</text></svg>
<div class="lab" style="left:592px;top:431px;width:112px">隆林各族自治县1例</div>
<div class="lab" style="left:732px;top:519px;width:64px">右江区3例</div>
<div class="lab" style="left:758px;top:535px;width:64px">田阳区2例</div>
<div class="lab" style="left:727px;top:576px;width:76px">德保县162例</div>
<div class="lab" style="left:711px;top:595px;width:70px">靖西市11例</div>
<div class="lab" style="left:820px;top:576px;width:64px">平果市1例</div>

<!-- bottom tools -->
<div class="a" style="left:713px;top:690px;width:349px;height:41px;background:linear-gradient(#fcfcfc,#ececee);border-radius:0 0 4px 4px"></div>
<svg class="a" style="left:718px;top:697px" width="136" height="27" fill="none" stroke="#19953a" stroke-width="2">
<circle cx="12" cy="11" r="8.500"/><path d="M8 11H16M12 7V15M18 17L24 24"/>
<circle cx="48" cy="11" r="8.500"/><path d="M44 11H52M54 17L60 24"/>
<path d="M81 7H88A7 7 0 0 1 88 21H75M85 2L80 7L85 12"/>
<path d="M111 6H126V24H111ZM115 6V2H131V20H126M115 11H122M115 15H122M115 19H120"/></svg>
<div class="a" style="left:860px;top:695px;width:1px;height:31px;background:#bbb"></div>
<div class="a" style="left:936px;top:695px;width:1px;height:31px;background:#bbb"></div>
<div class="t" style="left:881px;top:702px;font-size:12px;line-height:16px;color:#1a4a1a">100%</div>
<div class="t" style="left:948px;top:702px;font-size:12px;line-height:17px;color:#0e4a12;letter-spacing:-.2px">宽:302px,高:221px</div>

<!-- dropdown menu -->
<div class="a" style="left:935px;top:326px;width:178px;height:46px;background:#fff;border:1px solid #888;box-sizing:border-box;box-shadow:2px 2px 3px rgba(0,0,0,.35)"></div>
<div class="a" style="left:936px;top:350px;width:23px;height:21px;background:linear-gradient(90deg,#f2f2f2,#e8e8e8)"></div>
<div class="a" style="left:937px;top:327px;width:175px;height:22px;background:#b3d7f3;border:1px solid #0a7ad0;box-sizing:border-box"></div>
<div class="t" style="left:970px;top:329px;font-size:12.500px;line-height:18px;color:#111">自定义范围（推荐）</div>
<div class="t" style="left:970px;top:351px;font-size:12.500px;line-height:18px;color:#111">整个地图视野</div>
<svg class="a" style="left:840px;top:320px" width="95" height="28"><path d="M2 13L55 11V3L82 15L55 27V17Z" fill="#ee1c25"/></svg>
</div></body></html>
